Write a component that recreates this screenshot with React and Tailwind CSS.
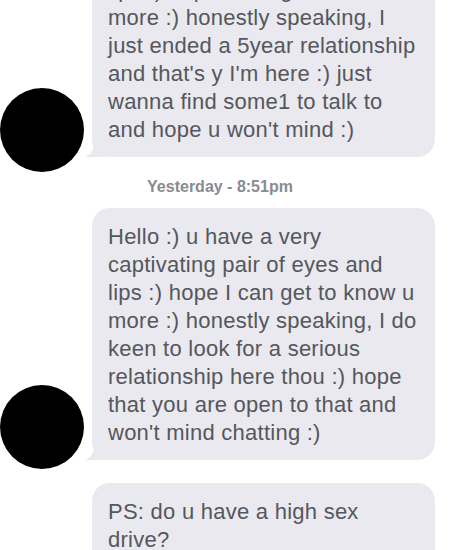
const firstMsg = [
  'lips :) hope I can get to know u',
  'more :) honestly speaking, I',
  'just ended a 5year relationship',
  "and that's y I'm here :) just",
  'wanna find some1 to talk to',
  "and hope u won't mind :)",
];

const secondMsg = [
  'Hello :) u have a very',
  'captivating pair of eyes and',
  'lips :) hope I can get to know u',
  'more :) honestly speaking, I do',
  'keen to look for a serious',
  'relationship here thou :) hope',
  'that you are open to that and',
  "won't mind chatting :)",
];

const thirdMsg = ['PS: do u have a high sex', 'drive?'];

function Bubble({ lines, tail }) {
  return (
    <div className="relative w-[343px] rounded-[18px] bg-[#e9e9ef] px-4 pt-[15px] pb-[13px] text-[22px] leading-[28px] tracking-[0.25px] text-[#55575c]">
      {lines.map((l, i) => (
        <div key={i} className="whitespace-nowrap">{l}</div>
      ))}
      {tail && (
        <svg className="absolute -left-[7px] bottom-0" width="20" height="16" viewBox="0 0 20 16">
          <path d="M20 0 L20 16 L0 16 C6 14 9 9 10 0 Z" fill="#e9e9ef" />
        </svg>
      )}
    </div>
  );
}

function Avatar({ drop }) {
  return <div className={`w-[84px] h-[84px] shrink-0 rounded-full bg-black ${drop}`} />;
}

export default function App() {
  return (
    <div
      className="w-[450px] h-[550px] overflow-hidden bg-white"
      style={{ fontFamily: '"Liberation Sans", Arial, sans-serif' }}
    >
      <div className="flex flex-col -mt-[39px]">
        <div className="flex items-end gap-[8px]">
          <Avatar drop="-mb-[15px]" />
          <Bubble lines={firstMsg} tail />
        </div>

        <div className="pt-[20px] pb-[11px] pr-[10px] text-center text-[16px] leading-[20px] font-bold text-[#8a8a8f]">
          Yesterday - 8:51pm
        </div>

        <div className="flex items-end gap-[8px]">
          <Avatar drop="-mb-[9px]" />
          <Bubble lines={secondMsg} tail />
        </div>

        <div className="flex items-end gap-[8px] mt-[23px]">
          <div className="w-[84px] shrink-0" />
          <Bubble lines={thirdMsg} />
        </div>
      </div>
    </div>
  );
}
